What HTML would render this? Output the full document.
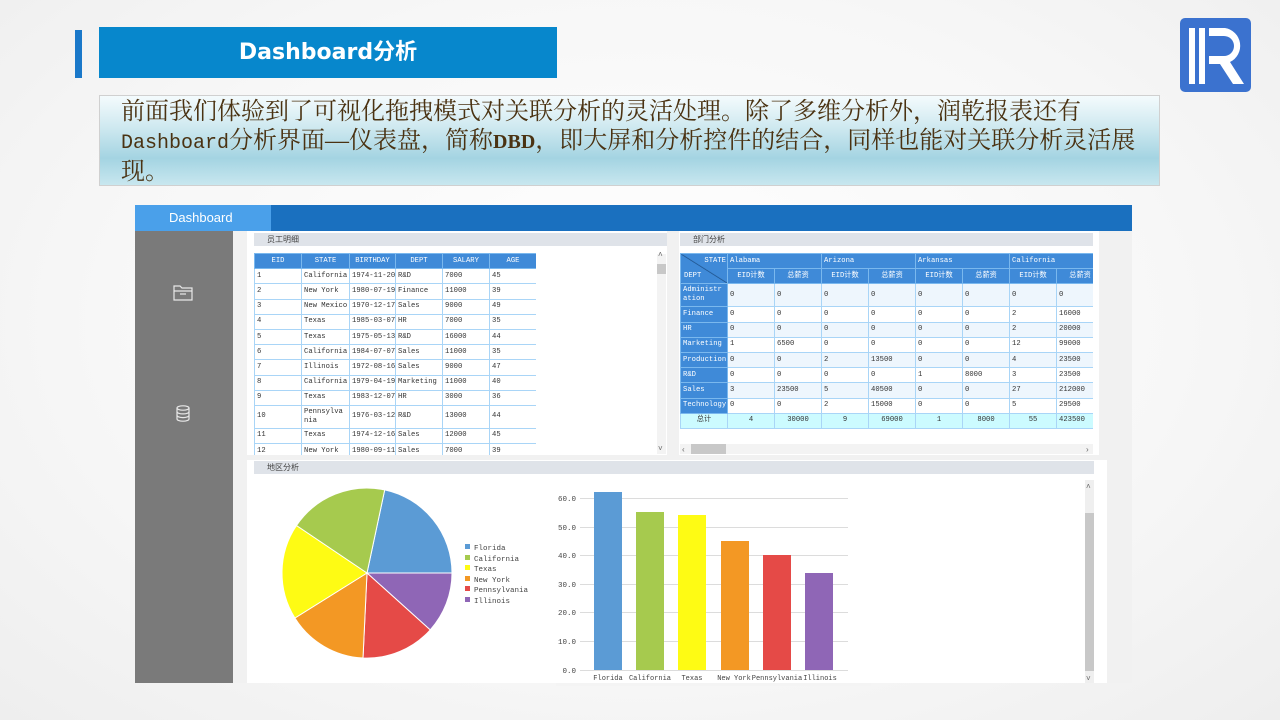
<!DOCTYPE html>
<html><head><meta charset="utf-8"><style>
*{margin:0;padding:0;box-sizing:border-box}
body{width:1280px;height:720px;position:relative;overflow:hidden;background:radial-gradient(ellipse at 50% 45%,#ffffff 0%,#f7f7f7 60%,#eeeeee 100%);font-family:"Liberation Sans","Noto Sans CJK SC",sans-serif}
.a{position:absolute}
table{border-collapse:collapse;table-layout:fixed;font-family:"Liberation Mono","Noto Sans CJK SC",monospace;font-size:7.2px;color:#333}
td{border:1px solid #a9d5f7;padding:0 2px;height:15.2px;line-height:9px;overflow:hidden;white-space:nowrap;background:#fff}
table tr.h td{background:#3f8ad8;color:#fff;text-align:center;border-color:#7ab8ee}
.d td{background:#eef6fd}
.d tr:nth-child(even) td{background:#fff}
table.d tr.h td{background:#3f8ad8;color:#fff;text-align:center;border-color:#7ab8ee}
table.d tr td.k{background:#3f8ad8;color:#fff;border-color:#7ab8ee}
table.d tr.tot td{background:#ccfbff;text-align:center}
table.d tr.h td.l{text-align:left}
.ph{position:absolute;background:#dfe3e9;font-size:8px;color:#444;padding-left:13px;line-height:13px;height:13px}
</style></head><body>
<div class="a" style="left:75px;top:30px;width:7px;height:48px;background:#1a78c9"></div>
<div class="a" style="left:99px;top:27px;width:458px;height:51px;background:#0787cc;color:#fff;font-weight:bold;font-size:22px;line-height:51px;text-align:center;font-family:'DejaVu Sans','Noto Sans CJK SC',sans-serif">Dashboard分析</div>
<svg class="a" style="left:1180px;top:18px" width="71" height="74" viewBox="0 0 71 74"><rect x="0" y="0" width="71" height="74" rx="5" fill="#3b72cf"/><rect x="9" y="10" width="6" height="56" fill="#fff"/><rect x="19" y="10" width="6" height="56" fill="#fff"/><path d="M29 10 H45 A18 18 0 0 1 50 44 L64 66 H53 L40 46 H29 V38 H44 A10 10 0 0 0 44 18 H29 Z" fill="#fff"/></svg>
<div class="a" style="left:99px;top:95px;width:1061px;height:91px;border:1px solid #d0d0d0;background:linear-gradient(#f4fbfd 0%,#cfe9f0 35%,#a4d4e2 70%,#c8e7ef 100%)"></div>
<div class="a" style="left:121px;top:98px;width:1030px;font-family:'Liberation Serif','Noto Serif CJK SC',serif;font-size:24px;line-height:29px;color:#4a3212">前面我们体验到了可视化拖拽模式对关联分析的灵活处理。除了多维分析外，润乾报表还有<br><span style="font-family:'Liberation Mono';font-size:20px">Dashboard</span>分析界面—仪表盘，简称<b style="font-size:20px">DBD</b>，即大屏和分析控件的结合，同样也能对关联分析灵活展现。</div>

<div class="a" style="left:135px;top:205px;width:997px;height:478px;background:#f1f1f1"></div>
<div class="a" style="left:135px;top:205px;width:997px;height:26px;background:#1a70bf"></div>
<div class="a" style="left:135px;top:205px;width:136px;height:26px;background:#4aa0ea;color:#fff;font-size:13px;line-height:26px;padding-left:34px">Dashboard</div>
<div class="a" style="left:135px;top:231px;width:98px;height:452px;background:#7a7a7a"></div>
<svg class="a" style="left:173px;top:283px" width="21" height="18" viewBox="0 0 21 18" fill="none" stroke="#e8e8e8" stroke-width="1.2"><path d="M1 3 H7 L9 5 H19 V17 H1 Z"/><path d="M1 8 H19"/><path d="M7 11 H13"/></svg>
<svg class="a" style="left:176px;top:405px" width="14" height="17" viewBox="0 0 14 17" fill="none" stroke="#e8e8e8" stroke-width="1.2"><ellipse cx="7" cy="3" rx="6" ry="2.2"/><path d="M1 3 V14 A6 2.2 0 0 0 13 14 V3"/><path d="M1 6.7 A6 2.2 0 0 0 13 6.7 M1 10.4 A6 2.2 0 0 0 13 10.4"/></svg>

<!-- panel1 -->
<div class="a" style="left:247px;top:231px;width:420px;height:224px;background:#fff"></div>
<div class="ph" style="left:254px;top:233px;width:413px">员工明细</div>
<div class="a" style="left:254px;top:253px;width:282px;height:202px;overflow:hidden">
<table style="width:282px">
<colgroup><col style="width:47px"><col style="width:48px"><col style="width:46px"><col style="width:47px"><col style="width:47px"><col style="width:47px"></colgroup>
<tr class="h"><td>EID</td><td>STATE</td><td>BIRTHDAY</td><td>DEPT</td><td>SALARY</td><td>AGE</td></tr>
<tr><td>1</td><td>California</td><td>1974-11-20</td><td>R&amp;D</td><td>7000</td><td>45</td></tr>
<tr><td>2</td><td>New York</td><td>1980-07-19</td><td>Finance</td><td>11000</td><td>39</td></tr>
<tr><td>3</td><td>New Mexico</td><td>1970-12-17</td><td>Sales</td><td>9000</td><td>49</td></tr>
<tr><td>4</td><td>Texas</td><td>1985-03-07</td><td>HR</td><td>7000</td><td>35</td></tr>
<tr><td>5</td><td>Texas</td><td>1975-05-13</td><td>R&amp;D</td><td>16000</td><td>44</td></tr>
<tr><td>6</td><td>California</td><td>1984-07-07</td><td>Sales</td><td>11000</td><td>35</td></tr>
<tr><td>7</td><td>Illinois</td><td>1972-08-16</td><td>Sales</td><td>9000</td><td>47</td></tr>
<tr><td>8</td><td>California</td><td>1979-04-19</td><td>Marketing</td><td>11000</td><td>40</td></tr>
<tr><td>9</td><td>Texas</td><td>1983-12-07</td><td>HR</td><td>3000</td><td>36</td></tr>
<tr><td style="height:23px">10</td><td style="white-space:normal;word-break:break-all">Pennsylvania</td><td>1976-03-12</td><td>R&amp;D</td><td>13000</td><td>44</td></tr>
<tr><td>11</td><td>Texas</td><td>1974-12-16</td><td>Sales</td><td>12000</td><td>45</td></tr>
<tr><td>12</td><td>New York</td><td>1980-09-11</td><td>Sales</td><td>7000</td><td>39</td></tr>
</table></div>
<div class="a" style="left:657px;top:254px;width:9px;height:200px;background:#f3f3f3"></div>
<div class="a" style="left:657px;top:264px;width:9px;height:10px;background:#c8c8c8"></div>
<div class="a" style="left:658px;top:250px;font-size:8px;color:#666">˄</div>
<div class="a" style="left:658px;top:444px;font-size:8px;color:#666">˅</div>

<!-- panel2 -->
<div class="a" style="left:679px;top:231px;width:420px;height:224px;background:#fff"></div>
<div class="ph" style="left:680px;top:233px;width:413px">部门分析</div>
<div class="a" style="left:680px;top:253px;width:413px;height:176px;overflow:hidden">
<table style="width:423px" class="d">
<colgroup><col span="9" style="width:47px"></colgroup>
<tr class="h"><td rowspan="2" style="position:relative;height:30px;background:linear-gradient(to top right,#3f8ad8 49%,#1d4f86 50%,#3f8ad8 52%)"><span style="position:absolute;right:1px;top:3px">STATE</span><span style="position:absolute;left:3px;bottom:2px">DEPT</span></td><td colspan="2" class="l">Alabama</td><td colspan="2" class="l">Arizona</td><td colspan="2" class="l">Arkansas</td><td colspan="2" class="l">California</td></tr>
<tr class="h"><td>EID计数</td><td>总薪资</td><td>EID计数</td><td>总薪资</td><td>EID计数</td><td>总薪资</td><td>EID计数</td><td>总薪资</td></tr>
<tr><td class="k" style="height:23px;white-space:normal;word-break:break-all">Administration</td><td>0</td><td>0</td><td>0</td><td>0</td><td>0</td><td>0</td><td>0</td><td>0</td></tr>
<tr><td class="k">Finance</td><td>0</td><td>0</td><td>0</td><td>0</td><td>0</td><td>0</td><td>2</td><td>16000</td></tr>
<tr><td class="k">HR</td><td>0</td><td>0</td><td>0</td><td>0</td><td>0</td><td>0</td><td>2</td><td>20000</td></tr>
<tr><td class="k">Marketing</td><td>1</td><td>6500</td><td>0</td><td>0</td><td>0</td><td>0</td><td>12</td><td>99000</td></tr>
<tr><td class="k">Production</td><td>0</td><td>0</td><td>2</td><td>13500</td><td>0</td><td>0</td><td>4</td><td>23500</td></tr>
<tr><td class="k">R&amp;D</td><td>0</td><td>0</td><td>0</td><td>0</td><td>1</td><td>8000</td><td>3</td><td>23500</td></tr>
<tr><td class="k">Sales</td><td>3</td><td>23500</td><td>5</td><td>40500</td><td>0</td><td>0</td><td>27</td><td>212000</td></tr>
<tr><td class="k">Technology</td><td>0</td><td>0</td><td>2</td><td>15000</td><td>0</td><td>0</td><td>5</td><td>29500</td></tr>
<tr class="tot"><td>总计</td><td>4</td><td>30000</td><td>9</td><td>69000</td><td>1</td><td>8000</td><td>55</td><td style="text-align:left">423500</td></tr>
</table></div>
<div class="a" style="left:680px;top:444px;width:413px;height:10px;background:#f3f3f3"></div>
<div class="a" style="left:691px;top:444px;width:35px;height:10px;background:#c8c8c8"></div>

<!-- panel3 -->
<div class="a" style="left:247px;top:460px;width:860px;height:223px;background:#fff"></div>
<div class="ph" style="left:254px;top:461px;width:840px">地区分析</div>
<svg class="a" style="left:0;top:0" width="1280" height="720">
<g stroke="#fff" stroke-width="1">
<path d="M367 573 L384.7 489.9 A85 85 0 0 1 452 573 Z" fill="#5b9bd5"/>
<path d="M367 573 L452 573 A85 85 0 0 1 430.2 629.9 Z" fill="#8f66b6"/>
<path d="M367 573 L430.2 629.9 A85 85 0 0 1 363 658 Z" fill="#e54a47"/>
<path d="M367 573 L363 658 A85 85 0 0 1 294.9 618 Z" fill="#f39824"/>
<path d="M367 573 L294.9 618 A85 85 0 0 1 296.5 525.5 Z" fill="#fefb14"/>
<path d="M367 573 L296.5 525.5 A85 85 0 0 1 384.7 489.9 Z" fill="#a6ca4e"/>
</g>
<g font-family="Liberation Mono,monospace" font-size="7.5" fill="#444">
<rect x="465" y="544" width="5" height="5" fill="#5b9bd5"/><text x="474" y="550">Florida</text>
<rect x="465" y="555" width="5" height="5" fill="#a6ca4e"/><text x="474" y="561">California</text>
<rect x="465" y="565" width="5" height="5" fill="#fefb14"/><text x="474" y="571">Texas</text>
<rect x="465" y="576" width="5" height="5" fill="#f39824"/><text x="474" y="582">New York</text>
<rect x="465" y="586" width="5" height="5" fill="#e54a47"/><text x="474" y="592">Pennsylvania</text>
<rect x="465" y="597" width="5" height="5" fill="#8f66b6"/><text x="474" y="603">Illinois</text>
</g>
<rect x="556" y="683" width="315" height="3" fill="#f4f4f4"/>
<g stroke="#dcdcdc" stroke-width="1">
<line x1="580" y1="498.5" x2="848" y2="498.5"/><line x1="580" y1="527.5" x2="848" y2="527.5"/><line x1="580" y1="555.5" x2="848" y2="555.5"/><line x1="580" y1="584.5" x2="848" y2="584.5"/><line x1="580" y1="612.5" x2="848" y2="612.5"/><line x1="580" y1="641.5" x2="848" y2="641.5"/><line x1="580" y1="670.5" x2="848" y2="670.5"/>
</g>
<g font-family="Liberation Mono,monospace" font-size="7.5" fill="#444" text-anchor="end">
<text x="576" y="501">60.0</text><text x="576" y="530">50.0</text><text x="576" y="558">40.0</text><text x="576" y="587">30.0</text><text x="576" y="615">20.0</text><text x="576" y="644">10.0</text><text x="576" y="673">0.0</text>
</g>
<rect x="594" y="492" width="28" height="178" fill="#5b9bd5"/>
<rect x="636" y="512" width="28" height="158" fill="#a6ca4e"/>
<rect x="678" y="515" width="28" height="155" fill="#fefb14"/>
<rect x="721" y="541" width="28" height="129" fill="#f39824"/>
<rect x="763" y="555" width="28" height="115" fill="#e54a47"/>
<rect x="805" y="573" width="28" height="97" fill="#8f66b6"/>
<g font-family="Liberation Mono,monospace" font-size="7" fill="#444" text-anchor="middle">
<text x="608" y="680">Florida</text><text x="650" y="680">California</text><text x="692" y="680">Texas</text><text x="734" y="680">New York</text><text x="777" y="680">Pennsylvania</text><text x="820" y="680">Illinois</text>
</g>
<rect x="1085" y="480" width="9" height="203" fill="#efefef"/>
<rect x="1085" y="513" width="9" height="158" fill="#c8c8c8"/>
<text x="1086" y="489" font-size="8" fill="#666">˄</text>
<text x="1086" y="681" font-size="8" fill="#666">˅</text>
<text x="682" y="452" font-size="8" fill="#666">‹</text>
<text x="1086" y="452" font-size="8" fill="#666">›</text>
</svg>
</body></html>
